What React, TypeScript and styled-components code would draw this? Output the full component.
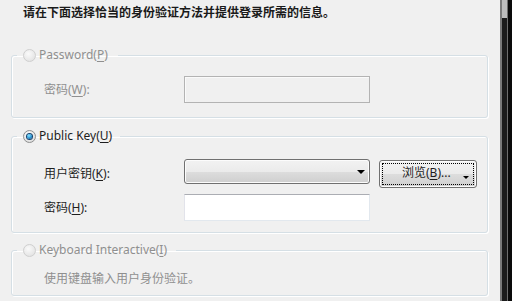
import React from "react";
import styled, { createGlobalStyle, css } from "styled-components";

const Global = createGlobalStyle`
  html, body { margin: 0; padding: 0; background: #f0f0f0; }
  body { font-family: "Noto Sans", "Noto Sans CJK SC", sans-serif; font-size: 12px; }
`;

const Frame = styled.div`
  width: 512px;
  height: 301px;
  display: flex;
  overflow: hidden;
  background: #f0f0f0;
`;

const Main = styled.div`
  width: 500px;
  display: flex;
  flex-direction: column;
  padding-left: 11px;
  box-sizing: border-box;
`;

const Heading = styled.div`
  margin: 4px 0 0 12px;
  font-family: "Noto Sans CJK SC", sans-serif;
  font-weight: 700;
  font-size: 12px;
  line-height: 16px;
  color: #1a1a1a;
`;

const Group = styled.fieldset<{ $top: number }>`
  margin: ${(p) => p.$top}px 0 0 0;
  padding: 0;
  width: 477px;
  box-sizing: border-box;
  border: 1px solid #d5dfe5;
  border-radius: 3px;
  box-shadow: inset 1px 1px 0 #ffffff, 1px 1px 0 #ffffff;
  min-inline-size: 0;
`;

const Legend = styled.legend<{ $gapRight: number }>`
  margin-left: 5px;
  padding: 0 ${(p) => p.$gapRight}px 0 6px;
  height: 16px;
  display: flex;
  align-items: center;
  gap: 3px;
`;

const Radio = styled.span<{ $checked?: boolean; $disabled?: boolean }>`
  width: 13px;
  height: 13px;
  box-sizing: border-box;
  border-radius: 50%;
  display: inline-flex;
  align-items: center;
  justify-content: center;
  border: 1px solid ${(p) => (p.$disabled ? "#cfcfcf" : "#8e8f8f")};
  background: ${(p) =>
    p.$disabled
      ? "radial-gradient(circle at 40% 35%, #fafafa, #e6e6e6 70%, #dcdcdc)"
      : "radial-gradient(circle at 40% 35%, #ffffff, #dcdcdc 80%)"};
  ${(p) =>
    p.$checked &&
    css`
      &::after {
        content: "";
        width: 5px;
        height: 5px;
        border-radius: 50%;
        background: radial-gradient(circle at 40% 35%, #8fe6ff 0%, #2b9ad8 50%, #0b3c74 100%);
        box-shadow: 0 0 0 1px #15426e;
      }
    `}
`;

const Text = styled.span<{ $disabled?: boolean }>`
  font-family: "Noto Sans", "Noto Sans CJK SC", sans-serif;
  font-size: 12px;
  line-height: 16px;
  color: ${(p) => (p.$disabled ? "#8f8f8f" : "#1e1e1e")};
  white-space: nowrap;
  u { text-decoration: underline; text-underline-offset: 2px; }
`;

const Body = styled.div<{ $pt: number; $pb: number }>`
  padding: ${(p) => p.$pt}px 0 ${(p) => p.$pb}px 32px;
  display: flex;
  flex-direction: column;
  gap: 6px;
`;

const Row = styled.div`
  display: grid;
  grid-template-columns: 140px 186px auto;
  align-items: center;
`;

const Input = styled.div<{ $disabled?: boolean }>`
  height: 27px;
  box-sizing: border-box;
  border: 1px solid ${(p) => (p.$disabled ? "#b3b3b3" : "#e2e8ee")};
  border-top-color: ${(p) => (p.$disabled ? "#b3b3b3" : "#abadb3")};
  border-left-color: ${(p) => (p.$disabled ? "#b3b3b3" : "#e2e3ea")};
  background: ${(p) => (p.$disabled ? "#f0f0f0" : "#ffffff")};
  box-shadow: ${(p) => (p.$disabled ? "inset 1px 1px 0 #fafafa" : "none")};
`;

const buttonFace = css`
  box-sizing: border-box;
  border: 1px solid #707070;
  border-radius: 3px;
  background: linear-gradient(#f2f2f2 0%, #ebebeb 50%, #dddddd 51%, #cfcfcf 100%);
  box-shadow: inset 0 0 0 1px #fcfcfc;
`;

const Combo = styled.div`
  ${buttonFace};
  height: 25px;
  align-self: start;
  display: flex;
  align-items: center;
  justify-content: flex-end;
  padding-right: 4px;
`;

const Arrow = styled.span`
  width: 0;
  height: 0;
  border-left: 4px solid transparent;
  border-right: 4px solid transparent;
  border-top: 4px solid #000;
`;

const SmallArrow = styled.span`
  width: 0;
  height: 0;
  border-left: 3px solid transparent;
  border-right: 3px solid transparent;
  border-top: 3px solid #000;
  align-self: flex-end;
  margin-bottom: 5px;
`;

const Browse = styled.div`
  ${buttonFace};
  margin-left: 9px;
  margin-top: 1px;
  width: 98px;
  height: 28px;
  padding: 2px;
  display: flex;
`;

const Focus = styled.div`
  flex: 1;
  border: 1px dotted #000;
  display: flex;
  align-items: center;
  justify-content: space-between;
  padding: 0 4px 0 19px;
`;

const BtnText = styled.span`
  font-family: "Noto Sans", "Noto Sans CJK SC", sans-serif;
  font-size: 12px;
  color: #1e1e1e;
  line-height: 16px;
  white-space: nowrap;
  margin-bottom: 3px;
  u { text-underline-offset: 2px; }
`;

const Strip = styled.div`
  width: 12px;
  display: flex;
  background: #0a0a0a;
`;

const StripLine = styled.div<{ $c: string; $w: number }>`
  width: ${(p) => p.$w}px;
  background: ${(p) => p.$c};
`;

const Thumb = styled.div`
  width: 5px;
  display: flex;
  flex-direction: column;
  background: #1c1c1c;
  &::before {
    content: "";
    height: 18px;
    background: #bdbdbd;
  }
`;

export default function App() {
  return (
    <Frame>
      <Global />
      <Main>
        <Heading>请在下面选择恰当的身份验证方法并提供登录所需的信息。</Heading>

        <Group $top={27}>
          <Legend $gapRight={10}>
            <Radio $disabled />
            <Text $disabled>
              Password(<u>P</u>)
            </Text>
          </Legend>
          <Body $pt={13} $pb={14}>
            <Row>
              <Text $disabled>
                密码(<u>W</u>):
              </Text>
              <Input $disabled />
            </Row>
          </Body>
        </Group>

        <Group $top={10}>
          <Legend $gapRight={8}>
            <Radio $checked />
            <Text>
              Public Key(<u>U</u>)
            </Text>
          </Legend>
          <Body $pt={15} $pb={11}>
            <Row>
              <Text>
                用户密钥(<u>K</u>):
              </Text>
              <Combo>
                <Arrow />
              </Combo>
              <Browse>
                <Focus>
                  <BtnText>
                    浏览(<u>B</u>)...
                  </BtnText>
                  <SmallArrow />
                </Focus>
              </Browse>
            </Row>
            <Row>
              <Text>
                密码(<u>H</u>):
              </Text>
              <Input />
            </Row>
          </Body>
        </Group>

        <Group $top={9}>
          <Legend $gapRight={9}>
            <Radio $disabled />
            <Text $disabled>
              Keyboard Interactive(<u>I</u>)
            </Text>
          </Legend>
          <Body $pt={13} $pb={8}>
            <Text $disabled>使用键盘输入用户身份验证。</Text>
          </Body>
        </Group>
      </Main>
      <Strip>
        <StripLine $c="#7a7a7a" $w={2} />
        <Thumb />
        <StripLine $c="#6e6e6e" $w={1} />
      </Strip>
    </Frame>
  );
}
